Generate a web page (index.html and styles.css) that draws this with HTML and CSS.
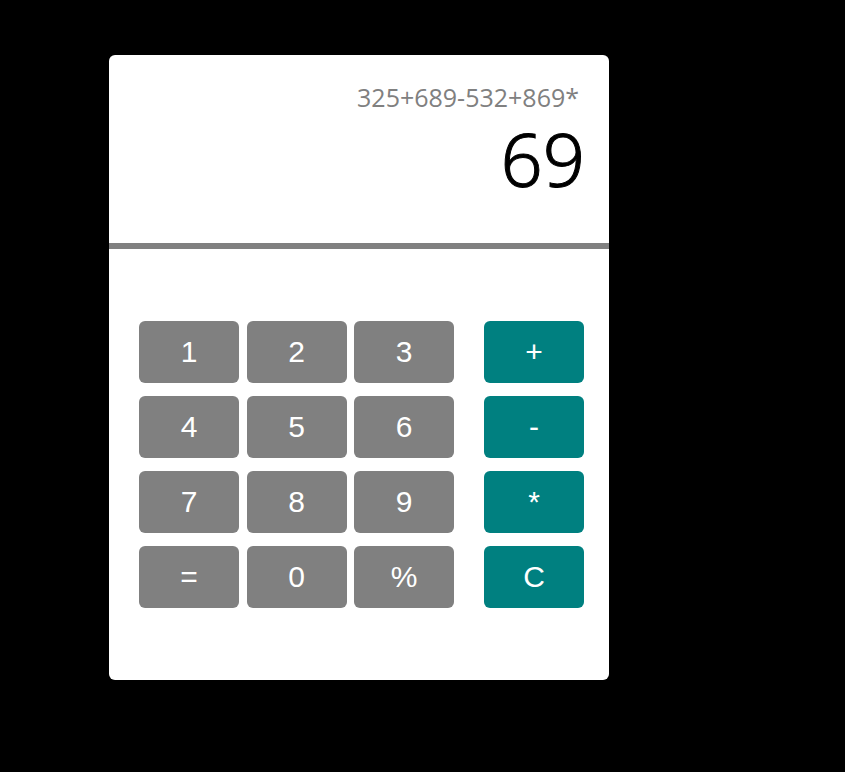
FILE: index.html
```html
<!DOCTYPE html>
<html lang="en">
<head>
<meta charset="utf-8">
<title>Calculator</title>
<link rel="stylesheet" href="styles.css">
</head>
<body>
<main class="calculator">
  <section class="display">
    <div class="history">325+689-532+869*</div>
    <output class="result">69</output>
  </section>
  <section class="keypad">
    <div class="numbers">
      <button class="key">1</button>
      <button class="key">2</button>
      <button class="key">3</button>
      <button class="key">4</button>
      <button class="key">5</button>
      <button class="key">6</button>
      <button class="key">7</button>
      <button class="key">8</button>
      <button class="key">9</button>
      <button class="key">=</button>
      <button class="key">0</button>
      <button class="key">%</button>
    </div>
    <div class="operators">
      <button class="key operator">+</button>
      <button class="key operator">-</button>
      <button class="key operator">*</button>
      <button class="key operator">C</button>
    </div>
  </section>
</main>
</body>
</html>
```
FILE: styles.css
```css
* {
  box-sizing: border-box;
}

body {
  margin: 0;
  padding: 55px 24px 92px 109px;
  background: #000;
  font-family: "Open Sans", "Noto Sans", sans-serif;
}

.calculator {
  max-width: 500px;
  background: #fff;
  border-radius: 6px;
}

.display {
  display: flex;
  flex-direction: column;
  align-items: flex-end;
  padding: 26px 24px 38px;
  border-bottom: 6px solid #808080;
}

.history {
  margin-right: 6px;
  font-size: 25px;
  line-height: 32px;
  color: #808080;
}

.result {
  font-family: "Noto Sans", "Open Sans", sans-serif;
  font-weight: 300;
  font-size: 74px;
  line-height: 92px;
  color: #000;
  -webkit-text-stroke: 1px #000;
}

.keypad {
  display: flex;
  gap: 30px;
  padding: 72px 25px 72px 30px;
}

.numbers {
  flex: 315;
  display: grid;
  grid-template-columns: repeat(3, minmax(0, 100px));
  justify-content: space-between;
  row-gap: 13px;
}

.operators {
  flex: 100;
  display: grid;
  gap: 13px;
}

.key {
  height: 62px;
  padding: 0;
  border: 0;
  border-radius: 6px;
  background: #808080;
  color: #fff;
  font-family: "Liberation Sans", Arial, sans-serif;
  font-size: 30px;
}

.operator {
  background: #008080;
}
```
